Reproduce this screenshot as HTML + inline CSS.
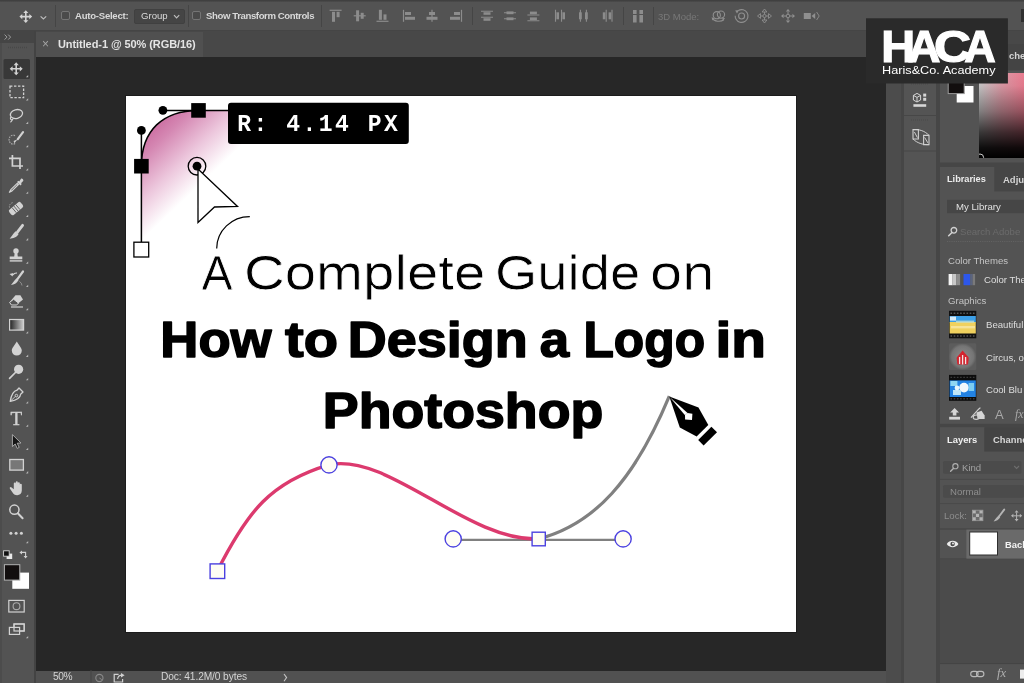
<!DOCTYPE html>
<html><head><meta charset="utf-8">
<style>
*{box-sizing:border-box;margin:0;padding:0}
html,body{width:1024px;height:683px;overflow:hidden;background:#282828}
body{position:relative;font-family:"Liberation Sans",sans-serif;color:#ddd;font-size:9px}
.abs{position:absolute}
#optbar{left:0;top:0;width:1024px;height:31px;background:linear-gradient(#3f3f3f 0,#414141 1px,#535353 2.2px,#535353 100%);border-bottom:1px solid #454545}
#tabbar{left:36px;top:31px;width:989px;height:26px;background:#484848}
#tab{left:36px;top:31.5px;width:167px;height:25.5px;background:#505050}
#toolbar{left:0;top:31px;width:36px;height:652px;background:#535353;border-right:2.2px solid #434343;border-left:2px solid #4c4c4c}
#tbhead{left:0;top:31px;width:33.8px;height:12.2px;background:#454545}
#canvas{left:36px;top:57px;width:850px;height:613.5px;background:#272727}
#doc{left:126px;top:95.8px;width:670.4px;height:536.2px;background:#fff;box-shadow:0 0 0 1px #1c1c1c}
#status{left:36px;top:670.5px;width:865px;height:13px;background:#515151}
#rcolA{left:886px;top:57px;width:15px;height:626px;background:#4c4c4c}
#rcolB{left:901px;top:57px;width:3px;height:626px;background:#464646}
#rcolC{left:904px;top:57px;width:32px;height:626px;background:#545454}
#rcolD{left:936px;top:57px;width:4px;height:626px;background:#464646}
#rpanel{left:940px;top:57px;width:84px;height:626px;background:#535353}
#logo{left:866px;top:18px;width:142px;height:66px;background:#2a2a2a}

.t{position:absolute;white-space:nowrap;line-height:1;transform-origin:0 50%}
.chk{position:absolute;width:9px;height:9px;border:1px solid #757575;border-radius:2px;background:#4a4a4a}
.vsep{position:absolute;width:1px;background:#454545}
svg,.t{will-change:transform}
</style></head>
<body>
<div class="abs" id="optbar"></div>
<div class="abs" id="tabbar"></div>
<div class="abs" id="tab"></div>
<div class="abs" id="canvas"></div>
<div class="abs" id="toolbar"></div>
<div class="abs" id="tbhead"></div>
<div class="abs" id="doc"></div>

<svg class="abs" id="art" style="left:0;top:0" width="1024" height="683" viewBox="0 0 1024 683">
<defs>
<filter id="vthick" x="-2%" y="-30%" width="104%" height="160%" color-interpolation-filters="sRGB"><feOffset dy="1.2" result="o"/><feBlend in="SourceGraphic" in2="o" mode="darken"/></filter>
<linearGradient id="pinkg" gradientUnits="userSpaceOnUse" x1="148" y1="118" x2="206" y2="179">
<stop offset="0" stop-color="#c65f97"/><stop offset="0.3" stop-color="#d588b3"/><stop offset="0.65" stop-color="#ecc6dc"/><stop offset="1" stop-color="#ffffff"/>
</linearGradient>
</defs>
<!-- corner radius graphic -->
<path d="M141.4,250 L141.4,166.2 C141.4,130.4 162.9,110.4 198.5,110.4 L300,110.4 L300,250 Z" fill="url(#pinkg)"/>
<path d="M141.4,242 L141.4,130.4 M162.9,110.4 L230,110.4" stroke="#000" stroke-width="1.5" fill="none"/>
<path d="M141.4,166.2 C141.4,130.4 162.9,110.4 198.5,110.4" stroke="#000" stroke-width="1.5" fill="none"/>
<circle cx="162.9" cy="110.3" r="4.4" fill="#000"/>
<circle cx="141.4" cy="130.4" r="4.4" fill="#000"/>
<rect x="191.2" y="103.1" width="14.6" height="14.6" fill="#000"/>
<rect x="134.1" y="158.9" width="14.6" height="14.6" fill="#000"/>
<rect x="133.9" y="242.2" width="14.8" height="14.8" fill="#fff" stroke="#000" stroke-width="1.3"/>
<circle cx="197" cy="166.2" r="8.8" fill="none" stroke="#000" stroke-width="1.3"/>
<circle cx="197" cy="166.2" r="4.4" fill="#000"/>
<path d="M198,169 L198,222.5 L214.5,207 L237.5,206.5 Z" fill="#fff" stroke="#000" stroke-width="1.3" stroke-linejoin="miter"/>
<path d="M216.7,248.5 A33,32 0 0 1 249.8,216.6" fill="none" stroke="#000" stroke-width="1.2"/>
<!-- tooltip -->
<rect x="228" y="102.8" width="180.8" height="41.2" rx="3" fill="#000"/>
<text x="237.2" y="131" font-family="'Liberation Mono',monospace" font-weight="700" font-size="23" fill="#fff" textLength="160.6" lengthAdjust="spacing">R: 4.14 PX</text>
<!-- heading -->
<g font-family="'Liberation Sans',sans-serif" fill="#000">
<g font-size="49" font-weight="400" stroke="#fff" stroke-width="0.8" filter="url(#vthick)" transform="translate(0,-0.6)">
<text y="289.3"><tspan x="201.68" textLength="28.2" lengthAdjust="spacingAndGlyphs">A</tspan> <tspan x="244.02" textLength="241.36" lengthAdjust="spacingAndGlyphs">Complete</tspan> <tspan x="494.94" textLength="145.36" lengthAdjust="spacingAndGlyphs">Guide</tspan> <tspan x="650.12" textLength="64.29" lengthAdjust="spacingAndGlyphs">on</tspan></text>
</g>
<g font-size="49.5" font-weight="700" stroke="#000" stroke-width="1.5" stroke-linejoin="round">
<text y="357.4"><tspan x="160.31" textLength="111.35" lengthAdjust="spacingAndGlyphs">How</tspan> <tspan x="285.12" textLength="52.98" lengthAdjust="spacingAndGlyphs">to</tspan> <tspan x="347.81" textLength="179.83" lengthAdjust="spacingAndGlyphs">Design</tspan> <tspan x="539.84" textLength="29.37" lengthAdjust="spacingAndGlyphs">a</tspan> <tspan x="583.44" textLength="121.61" lengthAdjust="spacingAndGlyphs">Logo</tspan> <tspan x="715.6" textLength="50.43" lengthAdjust="spacingAndGlyphs">in</tspan></text>
<text y="427.6"><tspan x="322.86" textLength="280.39" lengthAdjust="spacingAndGlyphs">Photoshop</tspan></text>
</g>
</g>
<!-- bezier graphic -->
<path d="M453,539.8 L623,539.8" stroke="#808080" stroke-width="2.2" fill="none"/>
<path d="M538.4,538.9 C594.3,524.6 634.7,479.6 669.3,396.2" stroke="#808080" stroke-width="3.2" fill="none"/>
<path d="M217.3,571 C247.9,510.7 271.1,481.9 328.9,464.8 C388.2,452 467.5,541.5 538.4,538.9" stroke="#dc3a6e" stroke-width="3.4" fill="none" stroke-linecap="round"/>
<rect x="210.1" y="563.9" width="14.6" height="14.6" fill="#fffdf4" stroke="#4b41e0" stroke-width="1.4"/>
<circle cx="329" cy="464.9" r="8.1" fill="#fffdf4" stroke="#4b41e0" stroke-width="1.4"/>
<circle cx="453.2" cy="538.9" r="8.1" fill="#fffdf4" stroke="#4b41e0" stroke-width="1.4"/>
<circle cx="623.1" cy="538.9" r="8.1" fill="#fffdf4" stroke="#4b41e0" stroke-width="1.4"/>
<rect x="532.1" y="532.2" width="13.2" height="13.6" fill="#fffdf4" stroke="#4b41e0" stroke-width="1.4"/>
<!-- pen nib -->
<path d="M669.3,396.4 L698.5,407.5 L708.3,425 L696.6,436.5 L679.8,427.4 Z" fill="#000"/>
<path d="M669.9,397.2 L687.6,412.9 L685,415.3 Z" fill="#fff"/>
<path d="M685,415 L687.5,412.9 L692.4,413.8 L692,419.9 L685.1,419.5 Z" fill="#fff"/>
<path d="M711.4,426.8 L717,432.3 L703.6,445.6 L698.2,440 Z" fill="#000"/>
</svg>
<div class="abs" id="status"></div>
<div class="abs" id="rcolA"></div>
<div class="abs" id="rcolB"></div>
<div class="abs" id="rcolC"></div>
<div class="abs" id="rcolD"></div>
<div class="abs" id="rpanel"></div>

<!-- options bar content -->
<div class="vsep" style="left:55px;top:5px;height:22px"></div>
<div class="chk" style="left:61px;top:11.2px"></div>
<div class="t" id="t_as" style="left:74.6px;top:11.3px;font-size:9.6px;letter-spacing:-0.26px;font-weight:700;color:#d8d8d8">Auto-Select:</div>
<div class="abs" style="left:134px;top:9px;width:51px;height:15px;background:#454545;border:1px solid #404040;border-radius:2px"></div>
<div class="t" id="t_grp" style="left:140.8px;top:11.3px;font-size:9.6px;color:#dadada">Group</div>
<div class="vsep" style="left:188px;top:5px;height:22px"></div>
<div class="chk" style="left:192.4px;top:11.2px"></div>
<div class="t" id="t_stc" style="left:206.3px;top:11.3px;font-size:9.6px;letter-spacing:-0.4px;font-weight:700;color:#d8d8d8">Show Transform Controls</div>
<div class="vsep" style="left:321px;top:5px;height:22px"></div>
<div class="vsep" style="left:472px;top:7px;height:18px"></div>
<div class="vsep" style="left:623px;top:7px;height:18px"></div>
<div class="vsep" style="left:653px;top:7px;height:18px"></div>
<div class="t" id="t_3d" style="left:658px;top:12px;font-size:9.5px;color:#787878">3D Mode:</div>

<div class="t" id="t_x" style="left:42.4px;top:38.2px;font-size:12px;color:#a4a4a4">×</div>
<div class="t" id="t_tab" style="left:57.6px;top:39.4px;font-size:11px;letter-spacing:-0.08px;font-weight:700;color:#e4e4e4">Untitled-1 @ 50% (RGB/16)</div>
<svg class="abs" id="uiL" style="left:0;top:0" width="1024" height="683" viewBox="0 0 1024 683">
<rect x="3.5" y="59" width="26.5" height="20" rx="1.5" fill="#383838"/>
<g transform="translate(16.2,68.8)" ><path d="M0,-6.5 L2.6,-3.6 L0.8,-3.6 L0.8,-0.8 L3.6,-0.8 L3.6,-2.6 L6.5,0 L3.6,2.6 L3.6,0.8 L0.8,0.8 L0.8,3.6 L2.6,3.6 L0,6.5 L-2.6,3.6 L-0.8,3.6 L-0.8,0.8 L-3.6,0.8 L-3.6,2.6 L-6.5,0 L-3.6,-2.6 L-3.6,-0.8 L-0.8,-0.8 L-0.8,-3.6 L-2.6,-3.6 Z" fill="#d2d2d2" transform="scale(1)"/></g>
<rect x="10" y="86.1" width="13.6" height="11.6" fill="none" stroke="#d2d2d2" stroke-width="1.3" stroke-dasharray="2.4 1.6"/>
<g transform="translate(16,115.4)" ><ellipse cx="0.8" cy="-1.2" rx="6.2" ry="4.4" fill="none" stroke="#d2d2d2" stroke-width="1.3" transform="rotate(-15)"/><path d="M-5,1.5 c-1.5,1.5 0,3.5 1.6,2.6 c-0.6,1.2 -1,2 -2.2,2.8" fill="none" stroke="#d2d2d2" stroke-width="1.1"/></g>
<g transform="translate(16,138.7)" ><path d="M-1,-3 a4,4.5 0 1 0 0.5,7.5" fill="none" stroke="#a9a9a9" stroke-width="1.1" stroke-dasharray="1.6 1"/><path d="M7,-6.5 L1.8,0.4" stroke="#d2d2d2" stroke-width="2.2" stroke-linecap="round"/><path d="M1.6,0.6 L-1.6,4.6 L-2.4,2.2 Z" fill="#d2d2d2"/></g>
<g transform="translate(16,162.0)" ><path d="M-3.6,-7 L-3.6,4 L7,4 M-7,-3.6 L4,-3.6 L4,7" fill="none" stroke="#d2d2d2" stroke-width="1.7"/></g>
<g transform="translate(16,185.3)" ><path d="M5.2,-6.8 a1.9,1.9 0 0 1 2,2.6 L5,-2 L5.8,-1.2 L4.4,0.2 L1,-3.2 L2.4,-4.6 L3.2,-3.8 Z" fill="#d2d2d2"/><path d="M1.2,-2 L-5.2,4.4 L-6.6,7 L-4,5.6 L2.4,-0.8 Z" fill="#535353" stroke="#d2d2d2" stroke-width="1.2" stroke-linejoin="round"/></g>
<g transform="translate(16,208.60000000000002)" ><g transform="rotate(-40)"><rect x="-7.5" y="-3.4" width="15" height="6.8" rx="2" fill="#d2d2d2"/><path d="M-2.4,-3.4 v6.8 M0,-3.4 v6.8 M2.4,-3.4 v6.8" stroke="#535353" stroke-width="0.8"/></g><path d="M-6.5,-1 a4,4 0 0 1 4,-5" fill="none" stroke="#a0a0a0" stroke-width="1" stroke-dasharray="1.4 1"/></g>
<g transform="translate(16,231.89999999999998)" ><path d="M6.6,-6.6 L1.4,0.2" stroke="#d2d2d2" stroke-width="2.8" stroke-linecap="round"/><path d="M-0.4,-0.6 L2.6,2.2 C0.6,5.8 -2.8,6.6 -6.4,6.8 C-4.4,5 -3.2,1.8 -0.4,-0.6 Z" fill="#d2d2d2"/></g>
<g transform="translate(16,255.2)" ><circle cx="0" cy="-4.2" r="2.7" fill="#d2d2d2"/><path d="M-1.3,-2.5 L-1.8,1.2 L-6.3,1.2 L-6.3,4 L6.3,4 L6.3,1.2 L1.8,1.2 L1.3,-2.5 Z" fill="#d2d2d2"/><rect x="-6.3" y="5" width="12.6" height="1.4" fill="#d2d2d2"/></g>
<g transform="translate(16,278.5)" ><path d="M7,-7 L1.8,0.2" stroke="#d2d2d2" stroke-width="2.2" stroke-linecap="round"/><path d="M1,-0.4 L2.6,1.4 C0.6,4.8 -2,6 -5,6.4 C-3.4,4.8 -1.8,2 1,-0.4 Z" fill="#d2d2d2"/><path d="M-3,-3.4 a4,4 0 0 1 4,-2" fill="none" stroke="#d2d2d2" stroke-width="1.1"/><path d="M-6.5,-4.6 L-2.6,-5.6 L-3.4,-2 Z" fill="#d2d2d2"/><path d="M3.5,3 a5,5 0 0 1 2.5,4" fill="none" stroke="#999" stroke-width="0.9"/></g>
<g transform="translate(16,301.8)" ><path d="M-0.5,-6.6 L4.4,-6.6 L7,-2.4 L0.6,3 L-4.6,3 L-6.4,0.4 Z" fill="#d2d2d2"/><path d="M-6.4,0.6 L-4.6,3.2 L0.4,3.2 L2.6,1.4 L-2.4,-2.6 Z" fill="#535353" stroke="#d2d2d2" stroke-width="1"/><path d="M-5,5.2 L7,5.2" stroke="#d2d2d2" stroke-width="1.2"/></g>
<defs><linearGradient id="tg" x1="0" x2="1" y1="0" y2="0"><stop offset="0" stop-color="#222"/><stop offset="1" stop-color="#cfcfcf"/></linearGradient></defs><rect x="9.6" y="319.5" width="14" height="10.6" fill="url(#tg)" stroke="#d2d2d2" stroke-width="1.2"/>
<g transform="translate(16.8,348.40000000000003)" ><path d="M0,-6.8 C2,-3 5,-0.6 5,2.2 A5,5 0 0 1 -5,2.2 C-5,-0.6 -2,-3 0,-6.8 Z" fill="#d2d2d2"/></g>
<g transform="translate(16,371.70000000000005)" ><circle cx="2.6" cy="-2.4" r="4.6" fill="#d2d2d2"/><path d="M-0.6,0.8 L-6.4,6.6" stroke="#d2d2d2" stroke-width="1.7" stroke-linecap="round"/></g>
<g transform="translate(16,395.0)" ><path d="M3,-7 L7,-3 L4.6,-0.8 C4.4,3 1,5 -5.8,6.4 C-4.6,-0.6 -2.4,-4 1,-4.8 Z" fill="none" stroke="#d2d2d2" stroke-width="1.3" stroke-linejoin="round"/><circle cx="0.4" cy="0.6" r="1.3" fill="none" stroke="#d2d2d2" stroke-width="1"/><path d="M-5.6,6.2 L-0.6,1.4" stroke="#d2d2d2" stroke-width="0.9"/></g>
<text x="16.4" y="424.5" font-family="'Liberation Serif',serif" font-size="19" font-weight="400" fill="#d2d2d2" text-anchor="middle" stroke="#d2d2d2" stroke-width="0.4">T</text>
<g transform="translate(16,441.6)" ><path d="M-3.6,-7 L-3.6,5 L-0.8,2.4 L1.2,6.8 L3.2,5.8 L1.2,1.6 L5,1.4 Z" fill="#161616" stroke="#b0b0b0" stroke-width="0.9" stroke-linejoin="round"/></g>
<rect x="9.8" y="459.50000000000006" width="13.6" height="10.6" fill="#777" stroke="#d2d2d2" stroke-width="1.3"/>
<g transform="translate(16.4,488.20000000000005)" ><path d="M-2.6,1 L-2.6,-4.6 a1,1 0 0 1 2,0 L-0.6,-6 a1,1 0 0 1 2,0 L1.4,-5 a1,1 0 0 1 2,0 L3.4,-3.4 a1,1 0 0 1 2,0 L5.4,2.4 C5.4,5.4 3.4,7 0.8,7 C-1.6,7 -2.8,6 -4.2,3.8 L-6.6,0.4 a1.1,1.1 0 0 1 1.8,-1.2 Z" fill="#d2d2d2"/></g>
<g transform="translate(16,511.5)" ><circle cx="-1.6" cy="-1.8" r="4.6" fill="none" stroke="#d2d2d2" stroke-width="1.5"/><path d="M1.8,1.8 L6.6,6.8" stroke="#d2d2d2" stroke-width="2" stroke-linecap="round"/></g>
<circle cx="10.9" cy="533.2" r="1.5" fill="#d2d2d2"/><circle cx="16.1" cy="533.2" r="1.5" fill="#d2d2d2"/><circle cx="21.4" cy="533.2" r="1.5" fill="#d2d2d2"/>
<path d="M28.2,75.0 l0,2.3 l-2.3,0 Z" fill="#b5b5b5"/>
<path d="M28.2,98.3 l0,2.3 l-2.3,0 Z" fill="#b5b5b5"/>
<path d="M28.2,121.60000000000001 l0,2.3 l-2.3,0 Z" fill="#b5b5b5"/>
<path d="M28.2,144.89999999999998 l0,2.3 l-2.3,0 Z" fill="#b5b5b5"/>
<path d="M28.2,168.2 l0,2.3 l-2.3,0 Z" fill="#b5b5b5"/>
<path d="M28.2,191.5 l0,2.3 l-2.3,0 Z" fill="#b5b5b5"/>
<path d="M28.2,214.8 l0,2.3 l-2.3,0 Z" fill="#b5b5b5"/>
<path d="M28.2,238.09999999999997 l0,2.3 l-2.3,0 Z" fill="#b5b5b5"/>
<path d="M28.2,261.4 l0,2.3 l-2.3,0 Z" fill="#b5b5b5"/>
<path d="M28.2,284.7 l0,2.3 l-2.3,0 Z" fill="#b5b5b5"/>
<path d="M28.2,308.0 l0,2.3 l-2.3,0 Z" fill="#b5b5b5"/>
<path d="M28.2,331.3 l0,2.3 l-2.3,0 Z" fill="#b5b5b5"/>
<path d="M28.2,354.6 l0,2.3 l-2.3,0 Z" fill="#b5b5b5"/>
<path d="M28.2,377.90000000000003 l0,2.3 l-2.3,0 Z" fill="#b5b5b5"/>
<path d="M28.2,401.2 l0,2.3 l-2.3,0 Z" fill="#b5b5b5"/>
<path d="M28.2,424.5 l0,2.3 l-2.3,0 Z" fill="#b5b5b5"/>
<path d="M28.2,447.8 l0,2.3 l-2.3,0 Z" fill="#b5b5b5"/>
<path d="M28.2,471.1 l0,2.3 l-2.3,0 Z" fill="#b5b5b5"/>
<path d="M28.2,494.40000000000003 l0,2.3 l-2.3,0 Z" fill="#b5b5b5"/>
<path d="M28.2,541.0 l0,2.3 l-2.3,0 Z" fill="#b5b5b5"/>
<rect x="6.6" y="553.6" width="5.6" height="5.4" fill="#e8e8e8"/><rect x="3.6" y="550.8" width="5.6" height="5.4" fill="#111" stroke="#d8d8d8" stroke-width="0.9"/>
<path d="M21.4,552.4 L25.6,552.4 L25.6,556.6" fill="none" stroke="#d2d2d2" stroke-width="1.1"/><path d="M19.4,552.4 L22,550.4 L22,554.4 Z M25.6,558.6 L23.6,556 L27.6,556 Z" fill="#d2d2d2"/>
<rect x="12.3" y="572.6" width="16.7" height="16.2" fill="#fff"/>
<rect x="4.4" y="564.7" width="15.4" height="15.4" fill="#120e0e" stroke="#b4b4b4" stroke-width="1"/>
<rect x="8.8" y="600.4" width="15.4" height="11.6" fill="none" stroke="#d2d2d2" stroke-width="1.2"/><circle cx="16.5" cy="606.2" r="3.4" fill="none" stroke="#aaa" stroke-width="1.1"/>
<rect x="14" y="624" width="10.2" height="7" fill="#535353" stroke="#d2d2d2" stroke-width="1.2"/><rect x="9.4" y="627.4" width="10.2" height="7" fill="#535353" stroke="#d2d2d2" stroke-width="1.2"/><rect x="14" y="624" width="10.2" height="7" fill="none" stroke="#d2d2d2" stroke-width="1.2"/>
<path d="M28.2,636.0 l0,2.3 l-2.3,0 Z" fill="#b5b5b5"/>
<path d="M4.6,34.6 l2.4,2.5 l-2.4,2.5 M8.2,34.6 l2.4,2.5 l-2.4,2.5" fill="none" stroke="#9e9e9e" stroke-width="1"/>
<path d="M8,47.5 L27,47.5" stroke="#484848" stroke-width="1.4" stroke-dasharray="1 1"/>
<g transform="translate(25.8,16.6)" ><path d="M0,-6.5 L2.6,-3.6 L0.8,-3.6 L0.8,-0.8 L3.6,-0.8 L3.6,-2.6 L6.5,0 L3.6,2.6 L3.6,0.8 L0.8,0.8 L0.8,3.6 L2.6,3.6 L0,6.5 L-2.6,3.6 L-0.8,3.6 L-0.8,0.8 L-3.6,0.8 L-3.6,2.6 L-6.5,0 L-3.6,-2.6 L-3.6,-0.8 L-0.8,-0.8 L-0.8,-3.6 L-2.6,-3.6 Z" fill="#d4d4d4" transform="scale(0.98)"/></g>
<path d="M40.6,16.4 L43.4,19 L46.2,16.4" fill="none" stroke="#bdbdbd" stroke-width="1.2"/>
<path d="M174,15.2 L176.6,17.8 L179.2,15.2" fill="none" stroke="#bdbdbd" stroke-width="1.2"/>
<path d="M329.6,10.3 h12" stroke="#8c8c8c" stroke-width="1.2"/><rect x="332.0" y="11.8" width="3" height="10" fill="#8c8c8c"/><rect x="336.6" y="11.8" width="3" height="5.4" fill="#8c8c8c"/>
<path d="M353.7,15.8 h12" stroke="#8c8c8c" stroke-width="1.2"/><rect x="356.09999999999997" y="10.3" width="3" height="11" fill="#8c8c8c"/><rect x="360.7" y="12.8" width="3" height="6" fill="#8c8c8c"/>
<path d="M376.5,21.3 h12" stroke="#8c8c8c" stroke-width="1.2"/><rect x="378.9" y="9.8" width="3" height="10" fill="#8c8c8c"/><rect x="383.5" y="14.4" width="3" height="5.4" fill="#8c8c8c"/>
<path d="M403.5,9.8 v12" stroke="#8c8c8c" stroke-width="1.2"/><rect x="405" y="12.0" width="6" height="3" fill="#8c8c8c"/><rect x="405" y="16.8" width="10" height="3" fill="#8c8c8c"/>
<path d="M432,9.8 v12" stroke="#8c8c8c" stroke-width="1.2"/><rect x="429" y="12.0" width="6" height="3" fill="#8c8c8c"/><rect x="426.5" y="16.8" width="11" height="3" fill="#8c8c8c"/>
<path d="M461.5,9.8 v12" stroke="#8c8c8c" stroke-width="1.2"/><rect x="454" y="12.0" width="6" height="3" fill="#8c8c8c"/><rect x="450" y="16.8" width="10" height="3" fill="#8c8c8c"/>
<path d="M481,11.3 h12 M481,17.3 h12" stroke="#8c8c8c" stroke-width="1.1"/><rect x="483.5" y="12.200000000000001" width="7" height="2.6" fill="#8c8c8c"/><rect x="483.5" y="18.2" width="7" height="2.6" fill="#8c8c8c"/>
<path d="M504,12.8 h12 M504,18.8 h12" stroke="#8c8c8c" stroke-width="1.1"/><rect x="506.5" y="11.4" width="7" height="2.8" fill="#8c8c8c"/><rect x="506.5" y="17.400000000000002" width="7" height="2.8" fill="#8c8c8c"/>
<path d="M527.4,15.0 h12 M527.4,20.8 h12" stroke="#8c8c8c" stroke-width="1.1"/><rect x="529.9" y="11.600000000000001" width="7" height="2.6" fill="#8c8c8c"/><rect x="529.9" y="17.400000000000002" width="7" height="2.6" fill="#8c8c8c"/>
<path d="M555.5,9.8 v12 M561.5,9.8 v12" stroke="#8c8c8c" stroke-width="1.1"/><rect x="556.4" y="12.3" width="2.6" height="7" fill="#8c8c8c"/><rect x="562.4" y="12.3" width="2.6" height="7" fill="#8c8c8c"/>
<path d="M580.4,9.8 v12 M586.4,9.8 v12" stroke="#8c8c8c" stroke-width="1.1"/><rect x="579.0" y="12.3" width="2.8" height="7" fill="#8c8c8c"/><rect x="585.0" y="12.3" width="2.8" height="7" fill="#8c8c8c"/>
<path d="M606.2,9.8 v12 M612,9.8 v12" stroke="#8c8c8c" stroke-width="1.1"/><rect x="602.8" y="12.3" width="2.6" height="7" fill="#8c8c8c"/><rect x="608.6" y="12.3" width="2.6" height="7" fill="#8c8c8c"/>
<rect x="633" y="10" width="3.6" height="12.5" fill="#8c8c8c"/><rect x="639.4" y="10" width="3.6" height="12.5" fill="#8c8c8c"/><path d="M632,14.5 h12" stroke="#535353" stroke-width="1"/>
<g transform="translate(718.4,16.2)" ><circle cx="-1.6" cy="-1" r="3.6" fill="none" stroke="#8f8f8f" stroke-width="1.1"/><circle cx="2.6" cy="-1.6" r="3.6" fill="none" stroke="#8f8f8f" stroke-width="1.1"/><path d="M-5.6,2.6 a6,3 0 0 0 11,1" fill="none" stroke="#8f8f8f" stroke-width="1.1"/><path d="M-6.8,1 L-4,2 L-6,4.2 Z M6.8,2 L4.4,4.6 L4,1.8Z" fill="#8f8f8f"/></g>
<g transform="translate(741.6,16)" ><circle r="6.4" fill="none" stroke="#8f8f8f" stroke-width="1.1" stroke-dasharray="33 7" transform="rotate(-120)"/><circle r="3" fill="none" stroke="#8f8f8f" stroke-width="1.1"/><path d="M-6.4,-5.6 L-2.4,-6 L-4.6,-2.6 Z" fill="#8f8f8f"/></g>
<g transform="translate(764.5,16)" ><path d="M0,-7 L2.4,-4 L-2.4,-4 Z M0,7 L2.4,4 L-2.4,4 Z M-7,0 L-4,-2.4 L-4,2.4 Z M7,0 L4,-2.4 L4,2.4 Z" fill="none" stroke="#8f8f8f" stroke-width="0.9"/><circle r="1.6" fill="none" stroke="#8f8f8f" stroke-width="0.9"/><path d="M0,-4 v2.4 M0,4 v-2.4 M-4,0 h2.4 M4,0 h-2.4" stroke="#8f8f8f" stroke-width="0.9"/></g>
<g transform="translate(788,16)" ><path d="M0,-7 L2.2,-4.4 L-2.2,-4.4 Z M0,7 L2.2,4.4 L-2.2,4.4 Z M-7,0 L-4.4,-2.2 L-4.4,2.2 Z M7,0 L4.4,-2.2 L4.4,2.2 Z" fill="#8f8f8f"/><path d="M0,-4.4 V4.4 M-4.4,0 H4.4" stroke="#8f8f8f" stroke-width="1"/><circle r="1.8" fill="#535353" stroke="#8f8f8f" stroke-width="1"/></g>
<g transform="translate(811.2,16)" ><rect x="-7.4" y="-3" width="7" height="6" fill="#8f8f8f"/><path d="M0.4,-0 L4,-3 L4,3 Z" fill="#8f8f8f"/><path d="M5.4,-4 L8,0 L5.4,4" fill="none" stroke="#8f8f8f" stroke-width="0.9"/></g>
</svg>
<svg class="abs" id="uiR" style="left:0;top:0" width="1024" height="683" viewBox="0 0 1024 683">
<path d="M904,115.5 h32 M904,151 h32" stroke="#474747" stroke-width="1.2"/>
<path d="M911,84 h18 M911,120 h18" stroke="#494949" stroke-width="1.2" stroke-dasharray="1 1"/>
<g transform="translate(920,100)" ><path d="M-6.6,-4.6 L-3,-6.6 L0.6,-4.6 L0.6,0 L-3,2 L-6.6,0 Z M-6.6,-4.6 L-3,-2.6 L0.6,-4.6 M-3,-2.6 V2" fill="none" stroke="#d6d6d6" stroke-width="1"/><rect x="3.2" y="-6.4" width="3" height="3" fill="#d6d6d6"/><rect x="3.2" y="-2.2" width="3" height="3" fill="#d6d6d6"/><rect x="-6.6" y="4.2" width="12.8" height="2.6" fill="#d6d6d6"/></g>
<g transform="translate(921,137)" ><path d="M-8,-7.4 L-2.6,-7.4 L-2.6,2 L-8,2 Z M2.6,-1.6 L8,-1.6 L8,7.6 L2.6,7.6 Z" fill="none" stroke="#cfcfcf" stroke-width="1.1"/><path d="M-8,-7.4 C-2,-8 4,-6 8,-1.6 M-8,2 C-4,6 2,8 8,7.6 M-6.6,-5 L-3.6,0.6 M3.6,0.4 L6.8,5.8" fill="none" stroke="#cfcfcf" stroke-width="1"/></g>
<defs><linearGradient id="cpS" x1="0" x2="1" y1="0" y2="0"><stop offset="0" stop-color="#c8c8c8"/><stop offset="0.5" stop-color="#dc9aa6"/><stop offset="1" stop-color="#ea7c90"/></linearGradient><linearGradient id="cpV" x1="0" x2="0" y1="0" y2="1"><stop offset="0" stop-color="#000" stop-opacity="0"/><stop offset="0.15" stop-color="#000" stop-opacity="0.04"/><stop offset="0.45" stop-color="#000" stop-opacity="0.36"/><stop offset="0.7" stop-color="#000" stop-opacity="0.72"/><stop offset="0.88" stop-color="#000" stop-opacity="0.93"/><stop offset="1" stop-color="#000" stop-opacity="1"/></linearGradient></defs>
<rect x="940" y="44" width="84" height="26.4" fill="#444"/><rect x="979" y="73" width="45" height="85" fill="url(#cpS)"/><rect x="979" y="73" width="45" height="85" fill="url(#cpV)"/>
<clipPath id="cpc"><rect x="979" y="73" width="45" height="85"/></clipPath><circle cx="980" cy="157.6" r="3.6" fill="none" stroke="#cfcfcf" stroke-width="1" clip-path="url(#cpc)"/>
<rect x="956.7" y="86" width="16.8" height="16.5" fill="#fff"/><rect x="948.2" y="78" width="16" height="15.6" fill="#120e0e" stroke="#9a9a9a" stroke-width="1"/>
<rect x="940" y="162.5" width="84" height="4.5" fill="#464646"/>
<rect x="940" y="423.8" width="84" height="3.4" fill="#464646"/>
<rect x="994.3" y="167" width="29.7" height="24.4" fill="#464646"/>
<rect x="947" y="199.8" width="77" height="13.4" fill="#464646"/>
<g transform="translate(952.5,231.5)" ><circle cx="1.4" cy="-1.2" r="2.8" fill="none" stroke="#d0d0d0" stroke-width="1.3"/><path d="M-0.8,1.2 L-3.8,4.2" stroke="#d0d0d0" stroke-width="1.6" stroke-linecap="round"/></g>
<path d="M947,241.5 h77" stroke="#626262" stroke-width="1" stroke-dasharray="1.2 1"/>
<rect x="948.6" y="274" width="3.9" height="11.2" fill="#f4f4f4"/>
<rect x="952.4" y="274" width="3.9" height="11.2" fill="#c8c8c8"/>
<rect x="956.2" y="274" width="3.9" height="11.2" fill="#8e8e8e"/>
<rect x="963.5" y="274" width="6.6" height="11.2" fill="#2d57ea"/><rect x="970.1" y="274" width="2.6" height="11.2" fill="#5a6480"/><rect x="972.7" y="274" width="2.4" height="11.2" fill="#7a7a7a"/>
<rect x="949" y="310.8" width="27.3" height="27.5" fill="#101010"/>
<rect x="949.6" y="316" width="26.2" height="6.4" fill="#3d9fe6"/><rect x="949.6" y="322" width="26.2" height="11.5" fill="#f0d15e"/><rect x="950" y="316.6" width="6" height="4" fill="#d8ecf8"/><rect x="956" y="320.6" width="18" height="2.2" fill="#bfe0d8" opacity="0.8"/><rect x="951" y="326" width="24" height="2.4" fill="#f7e7a8" opacity="0.8"/>
<path d="M950.5,313.3 h25" stroke="#555" stroke-width="1.6" stroke-dasharray="1.6 1.6"/><path d="M950.5,336 h25" stroke="#555" stroke-width="1.6" stroke-dasharray="1.6 1.6"/>
<defs><radialGradient id="th2"><stop offset="0" stop-color="#8c8c8c"/><stop offset="0.8" stop-color="#757575"/><stop offset="1" stop-color="#5c5c5c"/></radialGradient></defs>
<rect x="949" y="343.3" width="27.3" height="26.8" rx="1.5" fill="url(#th2)"/>
<path d="M962.6,350.4 L967.4,356 C968.6,357 969,358.2 968.6,359.4 L968,364.4 L957.4,364.4 L956.8,359.4 C956.4,358.2 956.8,357 958,356 Z" fill="#d3232e"/><path d="M959.6,357 v7 M962.6,355 v9.4 M965.6,357 v7" stroke="#f1e4e4" stroke-width="1.3"/>
<rect x="949" y="374.9" width="27.3" height="25.9" fill="#0c0c0c"/>
<rect x="949.6" y="380.4" width="26.2" height="16.6" fill="#2383e3"/><circle cx="964" cy="387.6" r="4.8" fill="#f2f8fb"/><rect x="950.4" y="381" width="7" height="5" fill="#8fd6f2"/><rect x="953" y="390" width="8" height="5" fill="#bfe6f7"/><rect x="968.6" y="383" width="5.4" height="8" fill="#7ccdf2"/><circle cx="957" cy="388" r="2.4" fill="#e8f6fc"/>
<path d="M950.5,377.4 h25" stroke="#3a3a3a" stroke-width="1.4" stroke-dasharray="1.6 1.6"/><path d="M950.5,398.8 h25" stroke="#3a3a3a" stroke-width="1.4" stroke-dasharray="1.6 1.6"/>
<g transform="translate(954.6,414)" ><path d="M0,-6 L4.4,-1.6 L1.8,-1.6 L1.8,1.4 L-1.8,1.4 L-1.8,-1.6 L-4.4,-1.6 Z" fill="#d6d6d6"/><rect x="-5.4" y="2.8" width="10.8" height="2.8" fill="#d6d6d6"/></g>
<g transform="translate(978,414)" ><path d="M-7,3.6 L0.6,-4.8 L2.4,-6.4" fill="none" stroke="#cfcfcf" stroke-width="1.2"/><path d="M-1.6,-1.4 L3.6,-3.2 L6.6,1.6 L6.6,5 L-0.4,5 Z" fill="#d6d6d6"/><ellipse cx="-1.8" cy="3.2" rx="3" ry="2.2" fill="none" stroke="#cfcfcf" stroke-width="1.1"/></g>
<rect x="984.3" y="427.2" width="39.7" height="24.4" fill="#444"/>
<rect x="943" y="461" width="78.4" height="12.8" rx="1.5" fill="#4b4b4b"/>
<g transform="translate(954,467.4)" ><circle cx="1.4" cy="-1.2" r="2.6" fill="none" stroke="#b0b0b0" stroke-width="1.1"/><path d="M-0.6,1 L-3.4,3.8" stroke="#b0b0b0" stroke-width="1.4" stroke-linecap="round"/></g>
<path d="M1014.2,466 L1016.6,468.4 L1019,466" fill="none" stroke="#6e6e6e" stroke-width="1.1"/>
<rect x="943" y="485" width="81" height="12.8" rx="1.5" fill="#4b4b4b"/>
<rect x="972.4" y="510.2" width="3.5" height="3.5" fill="#b4b4b4"/>
<rect x="972.4" y="513.7" width="3.5" height="3.5" fill="#6c6c6c"/>
<rect x="972.4" y="517.2" width="3.5" height="3.5" fill="#b4b4b4"/>
<rect x="975.9" y="510.2" width="3.5" height="3.5" fill="#6c6c6c"/>
<rect x="975.9" y="513.7" width="3.5" height="3.5" fill="#b4b4b4"/>
<rect x="975.9" y="517.2" width="3.5" height="3.5" fill="#6c6c6c"/>
<rect x="979.4" y="510.2" width="3.5" height="3.5" fill="#b4b4b4"/>
<rect x="979.4" y="513.7" width="3.5" height="3.5" fill="#6c6c6c"/>
<rect x="979.4" y="517.2" width="3.5" height="3.5" fill="#b4b4b4"/>
<rect x="972.4" y="510.2" width="10.5" height="10.5" fill="none" stroke="#9a9a9a" stroke-width="0.8"/>
<g transform="translate(998.6,515.6)" ><path d="M5.6,-6 L0.6,0.6" stroke="#b4b4b4" stroke-width="1.9" stroke-linecap="round"/><path d="M0,0 L1.6,1.6 C0,4.4 -2.2,5.6 -5,5.8 C-3.6,4.4 -2.2,2 0,0 Z" fill="#b4b4b4"/></g>
<g transform="translate(1016.6,515.8)" ><path d="M0,-5.6 L2,-3.2 L-2,-3.2 Z M0,5.6 L2,3.2 L-2,3.2 Z M-5.6,0 L-3.2,-2 L-3.2,2 Z M5.6,0 L3.2,-2 L3.2,2 Z" fill="#b4b4b4"/><path d="M0,-3.4 V3.4 M-3.4,0 H3.4" stroke="#b4b4b4" stroke-width="1"/></g>
<path d="M940,479.4 h84 M940,503.6 h84" stroke="#494949" stroke-width="1"/>
<rect x="940" y="529.4" width="84" height="29.4" fill="#535353"/><path d="M940,529 h84 M940,559 h84" stroke="#434343" stroke-width="1"/>
<rect x="966.4" y="529.6" width="57.6" height="29" fill="#6a6a6a"/>
<rect x="969.7" y="532" width="27.8" height="23" fill="#fff" stroke="#2e2e2e" stroke-width="1"/>
<g transform="translate(952.6,544)" ><path d="M-5.8,0 C-3.4,-4.2 3.4,-4.2 5.8,0 C3.4,4.2 -3.4,4.2 -5.8,0 Z" fill="#ececec"/><circle r="2.2" fill="#4a4a4a"/><circle r="1" cx="0.4" cy="-0.4" fill="#ececec"/></g>
<rect x="940" y="559.4" width="84" height="104.2" fill="#4b4b4b"/>
<path d="M940,663.6 h84" stroke="#444" stroke-width="1"/>
<g transform="translate(977.3,674)" ><rect x="-6.6" y="-2.6" width="7.4" height="5.2" rx="2.6" fill="none" stroke="#b9b9b9" stroke-width="1.1"/><rect x="-0.8" y="-2.6" width="7.4" height="5.2" rx="2.6" fill="none" stroke="#b9b9b9" stroke-width="1.1"/></g>
<rect x="1020" y="669.6" width="6" height="9" fill="#ededed"/>
</svg>
<div class="abs" style="left:1021px;top:9px;width:3px;height:13px;background:#303030"></div>
<!--ST-->
<div class="t" id="s_50" style="left:53.2px;top:671.9px;font-size:10.2px;letter-spacing:-0.45px;color:#d4d4d4">50%</div>
<div class="t" id="s_doc" style="left:161px;top:671.9px;font-size:10.2px;letter-spacing:-0.1px;color:#d4d4d4">Doc: 41.2M/0 bytes</div>
<svg class="abs" style="left:0;top:0" width="1024" height="683" viewBox="0 0 1024 683">
<path d="M91,670 v13" stroke="#444" stroke-width="1"/>
<circle cx="99.4" cy="678" r="3.6" fill="none" stroke="#8a8a8a" stroke-width="1.1"/><path d="M99.4,678 l2.4,1.6" stroke="#8a8a8a" stroke-width="1"/>
<path d="M118.6,674.4 h-4.4 v7.6 h8.4 v-3" fill="none" stroke="#d0d0d0" stroke-width="1.2"/><path d="M117.6,679 c0.4,-2.6 2,-3.8 4.4,-3.8" fill="none" stroke="#d0d0d0" stroke-width="1.2"/><path d="M121,673 l3.6,2.2 l-3.6,2.2 Z" fill="#d0d0d0"/>
<path d="M284,674 l2.6,3.6 l-2.6,3.6" fill="none" stroke="#c4c4c4" stroke-width="1.1"/>
</svg>
<!--/ST-->
<!--RT--><div class="t" id="r_lib" style="left:947.4px;top:174.7px;font-size:9.2px;color:#ececec;font-weight:700;">Libraries</div>
<div class="t" id="r_adj" style="left:1002.6px;top:174.5px;font-size:9.5px;color:#d4d4d4;font-weight:700;">Adju</div>
<div class="t" id="r_che" style="left:1009px;top:51.1px;font-size:9.5px;color:#d4d4d4;font-weight:700;">che</div>
<div class="t" id="r_my" style="left:956px;top:201.7px;font-size:9.6px;color:#e0e0e0;font-weight:400;">My Library</div>
<div class="t" id="r_sea" style="left:960px;top:227.3px;font-size:9.6px;color:#6b6b6b;font-weight:400;">Search Adobe</div>
<div class="t" id="r_ct" style="left:948.2px;top:256.1px;font-size:9.6px;color:#c4c4c4;font-weight:400;">Color Themes</div>
<div class="t" id="r_cth" style="left:984.3px;top:274.9px;font-size:9.6px;color:#dedede;font-weight:400;">Color The</div>
<div class="t" id="r_gr" style="left:948.2px;top:296.3px;font-size:9.6px;color:#c4c4c4;font-weight:400;">Graphics</div>
<div class="t" id="r_be" style="left:985.5px;top:320.3px;font-size:9.6px;color:#dedede;font-weight:400;">Beautiful</div>
<div class="t" id="r_ci" style="left:985.5px;top:352.7px;font-size:9.6px;color:#dedede;font-weight:400;">Circus, o</div>
<div class="t" id="r_co" style="left:985.5px;top:384.9px;font-size:9.6px;color:#dedede;font-weight:400;">Cool Blu</div>
<div class="t" id="r_A" style="left:994.6px;top:407.5px;font-size:13px;color:#a8a8a8;font-weight:400;">A</div>
<div class="t" id="r_fx" style="left:1014.6px;top:407.9px;font-size:12px;color:#a8a8a8;font-weight:400;font-style:italic;font-family:'Liberation Serif',serif;">fx</div>
<div class="t" id="r_lay" style="left:947.4px;top:435.0px;font-size:9.4px;color:#f0f0f0;font-weight:700;">Layers</div>
<div class="t" id="r_cha" style="left:992.5px;top:435.0px;font-size:9.4px;color:#d8d8d8;font-weight:700;">Channe</div>
<div class="t" id="r_kind" style="left:962px;top:462.9px;font-size:9.6px;color:#a2a2a2;font-weight:400;">Kind</div>
<div class="t" id="r_norm" style="left:949.5px;top:486.7px;font-size:9.6px;color:#8e8e8e;font-weight:400;">Normal</div>
<div class="t" id="r_lock" style="left:943.8px;top:510.8px;font-size:9.6px;color:#8e8e8e;font-weight:400;">Lock:</div>
<div class="t" id="r_back" style="left:1005.3px;top:540.4px;font-size:9.4px;color:#f2f2f2;font-weight:700;">Back</div>
<div class="t" id="r_fx2" style="left:996.6px;top:667.2px;font-size:12.5px;color:#b0b0b0;font-weight:400;font-style:italic;font-family:'Liberation Serif',serif;">fx</div>
<!--/RT-->
<svg class="abs" id="logosvg" style="left:0;top:0" width="1024" height="683" viewBox="0 0 1024 683">
<rect x="866" y="18.3" width="141.9" height="65.2" fill="#2a2a2a"/>
<text y="61.5" fill="#fff" font-family="'Liberation Sans',sans-serif" font-size="43.5" font-weight="700" stroke="#fff" stroke-width="1.2" stroke-linejoin="miter"><tspan x="881.34" textLength="33.93" lengthAdjust="spacingAndGlyphs">H</tspan><tspan x="908.06" textLength="32.42" lengthAdjust="spacingAndGlyphs">A</tspan><tspan x="934.13" textLength="37.04" lengthAdjust="spacingAndGlyphs">C</tspan><tspan x="964.24" textLength="31.46" lengthAdjust="spacingAndGlyphs">A</tspan></text>
<text x="882.1" y="73.6" fill="#fff" font-family="'Liberation Sans',sans-serif" font-size="11.3" font-weight="400"  textLength="113.41" lengthAdjust="spacingAndGlyphs">Haris&amp;Co. Academy</text>
</svg>

</body></html>
